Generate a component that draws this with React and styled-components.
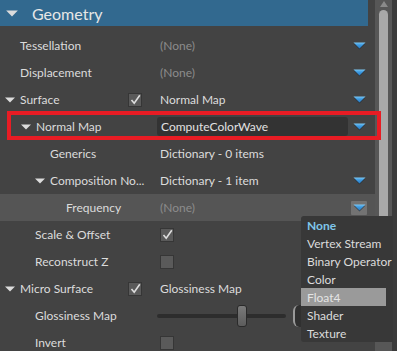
import React from 'react';
import styled, {createGlobalStyle} from 'styled-components';

const Global = createGlobalStyle`
    html, body {
        margin: 0;
        padding: 0;
        background: #434343;
    }
    body {
        font-family: Lato, "Open Sans", sans-serif;
        font-size: 12px;
        color: #dcdcdc;
    }
`;

const Screen = styled.div`
    position: relative;
    width: 397px;
    height: 351px;
    overflow: hidden;
    display: flex;
    align-items: flex-start;
    background: #434343;
`;

const Panel = styled.div`
    width: 375px;
    flex-shrink: 0;
    display: flex;
    flex-direction: column;
`;

const Header = styled.div`
    height: 26px;
    flex-shrink: 0;
    margin-right: 7px;
    background: #32698f;
    display: flex;
    align-items: center;
    padding-left: 6px;
    gap: 14px;
    font-size: 16px;
    color: #e6e6e6;
    margin-bottom: 6px;
`;

const Rows = styled.div`
    flex-shrink: 0;
    display: flex;
    flex-direction: column;
`;

const Row = styled.div`
    height: 27px;
    flex-shrink: 0;
    display: flex;
    align-items: center;
    background: ${props => props.selected ? '#555555' : 'transparent'};
`;

const Label = styled.div`
    width: ${props => props.narrow ? '128px' : '157px'};
    flex-shrink: 0;
    box-sizing: border-box;
    padding-left: ${props => props.indent}px;
    display: flex;
    align-items: center;
    white-space: nowrap;
`;

const Toggle = styled.span`
    width: 15px;
    margin-left: -15px;
    display: flex;
    align-items: center;
`;

const CheckCell = styled.div`
    width: 29px;
    flex-shrink: 0;
    display: flex;
    align-items: center;
`;

const Value = styled.div`
    flex: 1;
    min-width: 0;
    display: flex;
    align-items: center;
    padding-left: ${props => props.flush ? 0 : 3}px;
    color: ${props => props.muted ? '#8c8c8c' : '#dcdcdc'};
    white-space: nowrap;
`;

const Field = styled.div`
    flex: 1;
    height: 19px;
    margin-left: -3px;
    margin-right: 3px;
    padding-left: 4px;
    background: #333333;
    border-radius: 3px;
    display: flex;
    align-items: center;
    color: #e2e2e2;
`;

const ArrowCell = styled.div`
    width: 16px;
    height: 14px;
    margin-right: 8px;
    display: flex;
    align-items: center;
    justify-content: center;
    border-radius: 1px;
    background: ${props => props.active ? '#737373' : 'transparent'};
`;

const Box = styled.div`
    width: 12px;
    height: 12px;
    border: 1px solid #363636;
    background: #5a5a5a;
    display: flex;
    align-items: center;
    justify-content: center;
`;

const SliderWrap = styled.div`
    display: flex;
    align-items: center;
    gap: 7px;
    width: 100%;
`;

const Track = styled.div`
    position: relative;
    width: 132px;
    height: 4px;
    border-radius: 2px;
    background: #2d2d2d;
`;

const Thumb = styled.div`
    position: absolute;
    left: 80px;
    top: -9px;
    width: 8px;
    height: 20px;
    border: 1px solid #2a2a2a;
    border-radius: 3px;
    background: linear-gradient(#7a7a7a, #5c5c5c);
`;

const NumberBox = styled.div`
    width: 60px;
    height: 22px;
    box-sizing: border-box;
    border-radius: 6px;
    border-left: 2px solid #9a9a9a;
    background: #303030;
`;

const ScrollBar = styled.div`
    width: 22px;
    height: 351px;
    display: flex;
`;

const ScrollTrack = styled.div`
    width: 17px;
    background: #575757;
    display: flex;
    flex-direction: column;
    align-items: center;
    padding-top: 1px;
    gap: 3px;
`;

const ScrollEdge = styled.div`
    width: 5px;
    background: #3b3b3b;
`;

const ScrollThumb = styled.div`
    width: 9px;
    height: 330px;
    border-radius: 5px 5px 0 0;
    background: #a9a9a9;
`;

const Popup = styled.div`
    position: absolute;
    left: 301px;
    top: 216px;
    width: 92px;
    height: 126px;
    background: #383838;
    border-radius: 3px 0 0 3px;
    display: flex;
    flex-direction: column;
`;

const Option = styled.div`
    height: 18px;
    flex-shrink: 0;
    width: 85px;
    box-sizing: border-box;
    padding-left: 6px;
    display: flex;
    align-items: center;
    white-space: nowrap;
    font-weight: ${props => props.current ? 700 : 400};
    color: ${props => props.current ? '#7fc6ea' : props.hover ? '#e4e4e4' : '#dcdcdc'};
    background: ${props => props.hover ? '#9a9a9a' : 'transparent'};
`;

const Marker = styled.div`
    position: absolute;
    left: 7px;
    top: 111px;
    width: 374px;
    height: 29px;
    box-sizing: border-box;
    border: 4px solid #e81c24;
`;

const Caret = ({size = 10, color = '#dcdcdc'}) => (
    <svg width={size} height={size / 2 + 1} viewBox="0 0 10 6">
        <polygon points="0,0.5 10,0.5 5,5.5" fill={color}/>
    </svg>
);

const BlueArrow = () => (
    <svg width="13" height="8" viewBox="0 0 13 8">
        <defs>
            <linearGradient id="ba" x1="0" y1="0" x2="0" y2="1">
                <stop offset="0" stopColor="#7cc8f4"/>
                <stop offset="0.4" stopColor="#3d9be2"/>
                <stop offset="1" stopColor="#2a7cc4"/>
            </linearGradient>
        </defs>
        <polygon points="1,2 12,2 6.5,7.5" fill="#1f2f3c" opacity="0.7"/>
        <polygon points="0.5,0.5 12.5,0.5 6.5,6.5" fill="url(#ba)"/>
    </svg>
);

const Check = ({checked}) => (
    <Box>
        {checked ? <svg width="11" height="11" viewBox="0 0 11 11">
            <path d="M1.5 6 L4.2 9.2 L9.8 1.2" fill="none" stroke="#dedede" strokeWidth="1.6"/>
        </svg> : null}
    </Box>
);

const Arrow = ({active}) => <ArrowCell active={active}><BlueArrow/></ArrowCell>;
const NoArrow = () => <ArrowCell/>;

const options = ['None', 'Vertex Stream', 'Binary Operator', 'Color', 'Float4', 'Shader', 'Texture'];

export default function App() {
    return (
        <Screen>
            <Global/>
            <Panel>
                <Header>
                    <Caret size={12} color="#dcdcdc"/>
                    <span>Geometry</span>
                </Header>
                <Rows>
                    <Row>
                        <Label indent={20}>Tessellation</Label>
                        <Value muted>(None)</Value>
                        <Arrow/>
                    </Row>
                    <Row>
                        <Label indent={20}>Displacement</Label>
                        <Value muted>(None)</Value>
                        <Arrow/>
                    </Row>
                    <Row>
                        <Label indent={20} narrow><Toggle><Caret/></Toggle>Surface</Label>
                        <CheckCell><Check checked/></CheckCell>
                        <Value>Normal Map</Value>
                        <Arrow/>
                    </Row>
                    <Row>
                        <Label indent={36}><Toggle><Caret/></Toggle>Normal Map</Label>
                        <Value><Field>ComputeColorWave</Field></Value>
                        <Arrow/>
                    </Row>
                    <Row>
                        <Label indent={50}>Generics</Label>
                        <Value>Dictionary - 0 items</Value>
                        <NoArrow/>
                    </Row>
                    <Row>
                        <Label indent={50}><Toggle><Caret/></Toggle>Composition No...</Label>
                        <Value>Dictionary - 1 item</Value>
                        <Arrow/>
                    </Row>
                    <Row selected>
                        <Label indent={66}>Frequency</Label>
                        <Value muted>(None)</Value>
                        <Arrow active/>
                    </Row>
                    <Row>
                        <Label indent={35}>Scale &amp; Offset</Label>
                        <Value><Check checked/></Value>
                        <NoArrow/>
                    </Row>
                    <Row>
                        <Label indent={35}>Reconstruct Z</Label>
                        <Value><Check/></Value>
                        <NoArrow/>
                    </Row>
                    <Row>
                        <Label indent={20} narrow><Toggle><Caret/></Toggle>Micro Surface</Label>
                        <CheckCell><Check checked/></CheckCell>
                        <Value>Glossiness Map</Value>
                        <Arrow/>
                    </Row>
                    <Row>
                        <Label indent={35}>Glossiness Map</Label>
                        <Value flush>
                            <SliderWrap>
                                <Track><Thumb/></Track>
                                <NumberBox/>
                            </SliderWrap>
                        </Value>
                        <NoArrow/>
                    </Row>
                    <Row>
                        <Label indent={35}>Invert</Label>
                        <Value><Check/></Value>
                        <NoArrow/>
                    </Row>
                </Rows>
            </Panel>
            <ScrollBar>
                <ScrollTrack>
                    <svg width="8" height="6" viewBox="0 0 8 6">
                        <polygon points="4,0 8,6 0,6" fill="#8a8a8a"/>
                    </svg>
                    <ScrollThumb/>
                </ScrollTrack>
                <ScrollEdge/>
            </ScrollBar>
            <Marker/>
            <Popup>
                {options.map(o => (
                    <Option key={o} current={o === 'None'} hover={o === 'Float4'}>{o}</Option>
                ))}
            </Popup>
        </Screen>
    );
}
